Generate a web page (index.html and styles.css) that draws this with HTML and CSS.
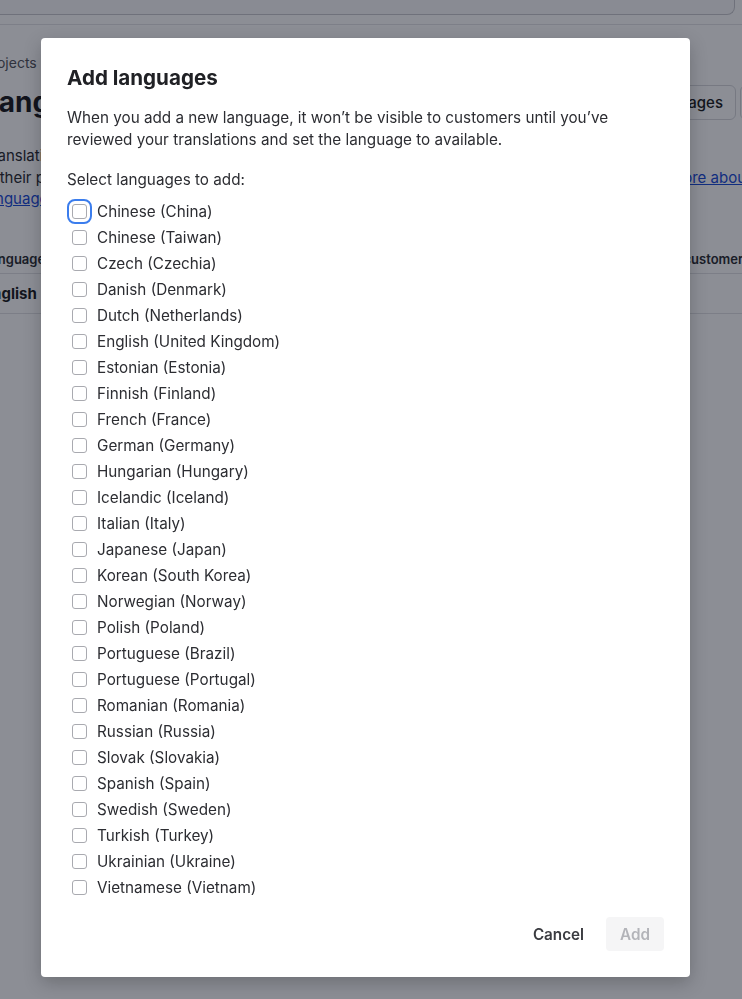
FILE: index.html
```html
<!DOCTYPE html>
<html lang="en">
<head>
<meta charset="utf-8">
<title>Add languages</title>
<link rel="stylesheet" href="styles.css">
</head>
<body>
<div class="page">
  <div class="topbar"><div class="search"></div></div>
  <div class="content">
    <div class="crumb">Projects</div>
    <div class="head-row">
      <h1 class="page-title">Languages</h1>
      <div class="actions">
        <button class="btn-outline">Add languages</button>
        <button class="btn-outline btn-more">⋯</button>
      </div>
    </div>
    <p class="intro">
      <span class="line">Translations let customers read your content in the language they prefer, and see</span>
      <span class="line">in their preferred language. Add a new language, translate all your content, then publish it. <a href="#">Learn more about</a></span>
      <span class="line"><a href="#">languages</a></span>
    </p>
    <div class="table">
      <div class="thead"><span>Language</span><span>Visible to customers</span></div>
      <div class="trow"><span class="strong">English</span><span>Yes</span></div>
    </div>
  </div>
</div>

<div class="overlay">
  <div class="modal" role="dialog" aria-labelledby="mt">
    <h2 class="modal-title" id="mt">Add languages</h2>
    <p class="modal-desc">When you add a new language, it won’t be visible to customers until you’ve reviewed your translations and set the language to available.</p>
    <p class="select-label">Select languages to add:</p>
    <ul class="lang-list">
      <li><label><input type="checkbox" class="focused"><span>Chinese (China)</span></label></li>
      <li><label><input type="checkbox"><span>Chinese (Taiwan)</span></label></li>
      <li><label><input type="checkbox"><span>Czech (Czechia)</span></label></li>
      <li><label><input type="checkbox"><span>Danish (Denmark)</span></label></li>
      <li><label><input type="checkbox"><span>Dutch (Netherlands)</span></label></li>
      <li><label><input type="checkbox"><span>English (United Kingdom)</span></label></li>
      <li><label><input type="checkbox"><span>Estonian (Estonia)</span></label></li>
      <li><label><input type="checkbox"><span>Finnish (Finland)</span></label></li>
      <li><label><input type="checkbox"><span>French (France)</span></label></li>
      <li><label><input type="checkbox"><span>German (Germany)</span></label></li>
      <li><label><input type="checkbox"><span>Hungarian (Hungary)</span></label></li>
      <li><label><input type="checkbox"><span>Icelandic (Iceland)</span></label></li>
      <li><label><input type="checkbox"><span>Italian (Italy)</span></label></li>
      <li><label><input type="checkbox"><span>Japanese (Japan)</span></label></li>
      <li><label><input type="checkbox"><span>Korean (South Korea)</span></label></li>
      <li><label><input type="checkbox"><span>Norwegian (Norway)</span></label></li>
      <li><label><input type="checkbox"><span>Polish (Poland)</span></label></li>
      <li><label><input type="checkbox"><span>Portuguese (Brazil)</span></label></li>
      <li><label><input type="checkbox"><span>Portuguese (Portugal)</span></label></li>
      <li><label><input type="checkbox"><span>Romanian (Romania)</span></label></li>
      <li><label><input type="checkbox"><span>Russian (Russia)</span></label></li>
      <li><label><input type="checkbox"><span>Slovak (Slovakia)</span></label></li>
      <li><label><input type="checkbox"><span>Spanish (Spain)</span></label></li>
      <li><label><input type="checkbox"><span>Swedish (Sweden)</span></label></li>
      <li><label><input type="checkbox"><span>Turkish (Turkey)</span></label></li>
      <li><label><input type="checkbox"><span>Ukrainian (Ukraine)</span></label></li>
      <li><label><input type="checkbox"><span>Vietnamese (Vietnam)</span></label></li>
    </ul>
    <div class="modal-footer">
      <button class="btn-text">Cancel</button>
      <button class="btn-disabled" disabled>Add</button>
    </div>
  </div>
</div>
</body>
</html>
```

FILE: styles.css
```css
* { box-sizing: border-box; }

html, body {
  margin: 0;
  padding: 0;
  height: 100%;
  overflow: hidden;
}

body {
  font-family: Inter, "Noto Sans", "Liberation Sans", sans-serif;
  color: #2c2d32;
  background: #ffffff;
}

/* ---------- background page ---------- */
.page {
  width: 742px;
  height: 999px;
  background: #ffffff;
  overflow: hidden;
}

.topbar {
  height: 25px;
  border-bottom: 1px solid #e3e4e7;
  padding: 0 7px 0 0;
}

.search {
  height: 15px;
  margin-left: -20px;
  border: 1px solid #c9cacf;
  border-top: none;
  border-radius: 0 0 8px 8px;
  background: #fafafb;
}

.content {
  margin-left: -17px;
  padding-top: 29px;
}

.crumb {
  font-size: 14px;
  line-height: 18px;
  color: #55575e;
}

.head-row {
  display: flex;
  align-items: center;
  justify-content: space-between;
  margin-top: 12px;
  margin-right: -34px;
}

.page-title {
  margin: 0;
  font-size: 28px;
  font-weight: 700;
  line-height: 36px;
  color: #1e1f23;
}

.actions {
  display: flex;
  gap: 4px;
}

.btn-outline {
  height: 35px;
  padding: 0 12px;
  font: 500 15px Inter, "Liberation Sans", sans-serif;
  color: #1e1f23;
  background: #ffffff;
  border: 1px solid #d8d9dd;
  border-radius: 6px;
}

.btn-more {
  width: 36px;
  padding: 0;
}

.intro {
  margin: 25px 0 0;
  font-size: 15px;
  line-height: 21.5px;
  color: #2c2d32;
  white-space: nowrap;
}

.intro .line {
  display: block;
}

.intro a {
  color: #1d4ed8;
}

.table {
  margin-top: 36px;
}

.thead, .trow {
  display: grid;
  grid-template-columns: 1fr 135px;
  align-items: center;
  margin-right: -15px;
}

.thead {
  height: 28px;
  font-size: 13px;
  font-weight: 600;
  color: #2e3035;
  border-bottom: 1px solid #e1e2e5;
}

.trow {
  height: 40px;
  font-size: 15px;
  border-bottom: 1px solid #e1e2e5;
}

.strong { font-weight: 700; color: #1e1f23; }

/* ---------- overlay + dialog ---------- */
.overlay {
  position: fixed;
  inset: 0;
  background: rgba(4, 8, 24, 0.46);
  padding: 38px 0 0 41px;
}

.modal {
  width: 649px;
  background: #ffffff;
  border-radius: 4px;
  padding: 26px;
  box-shadow: 0 6px 18px rgba(0, 0, 0, 0.22);
}

.modal-title {
  margin: 0;
  font-size: 20.6px;
  font-weight: 700;
  line-height: 28px;
  color: #202125;
}

.modal-desc {
  margin: 15px 0 0;
  font-size: 15.25px;
  line-height: 22px;
  color: #2c2d32;
}

.select-label {
  margin: 18px 0 0;
  font-size: 15.25px;
  line-height: 22px;
  color: #2c2d32;
}

.lang-list {
  list-style: none;
  margin: 7px 0 0;
  padding: 0;
}

.lang-list li {
  height: 26px;
}

.lang-list label {
  display: flex;
  align-items: center;
  height: 26px;
  font-size: 15.25px;
  color: #2c2d32;
}

.lang-list input {
  appearance: none;
  -webkit-appearance: none;
  width: 15px;
  height: 15px;
  margin: 0 10px 0 5px;
  border: 1px solid #a9aab0;
  border-radius: 3px;
  background: #ffffff;
  flex: none;
}

.lang-list input.focused {
  outline: 2px solid #3b7ded;
  outline-offset: 3px;
}

.modal-footer {
  display: flex;
  justify-content: flex-end;
  align-items: center;
  gap: 8px;
  margin-top: 17px;
}

.btn-text, .btn-disabled {
  height: 34px;
  padding: 0 14px;
  font: 600 15.25px Inter, "Liberation Sans", sans-serif;
  border: none;
  border-radius: 4px;
}

.btn-text {
  background: transparent;
  color: #3a3b40;
}

.btn-disabled {
  background: #f5f5f6;
  color: #b3b4b9;
}
```
